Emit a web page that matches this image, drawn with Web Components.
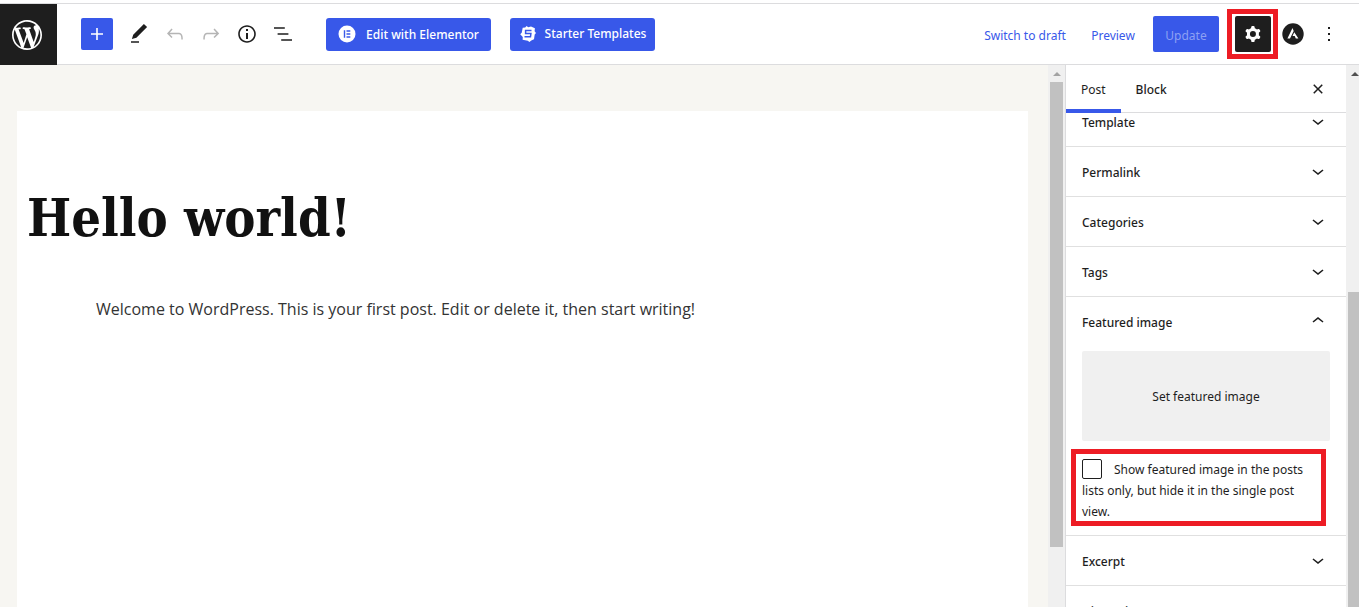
<!DOCTYPE html>
<html lang="en">
<head>
<meta charset="utf-8">
<title>Edit Post</title>
<style>
html, body { margin: 0; height: 100%; }
body { font-family: "Noto Sans", "Open Sans", sans-serif; font-size: 12px; color: #1e1e1e; background: #fff; overflow: hidden; }
</style>
</head>
<body>
<post-editor></post-editor>
<script>
const define = (name, html) => customElements.define(name, class extends HTMLElement {
  connectedCallback() {
    if (this.shadowRoot) return;
    const root = this.attachShadow({ mode: "open" });
    const t = document.createElement("template");
    t.innerHTML = typeof html === "function" ? html(this) : html;
    root.append(t.content.cloneNode(true));
  }
});

const ICONS = {
  plus: ["0 0 24 24", '<path d="M18 11.2h-5.2V6h-1.6v5.2H6v1.6h5.2V18h1.6v-5.2H18z"/>'],
  edit: ["0 0 24 24", '<path d="M20.1 5.1L16.9 2 6.2 12.7l-1.3 4.4 4.5-1.3L20.1 5.1zM4 20.8h8v-1.5H4v1.5z"/>'],
  undo: ["0 0 24 24", '<path d="M18.3 11.7c-.6-.6-1.4-.9-2.3-.9H6.7l2.9-3.3-1.1-1-4.5 5L8.5 16l1-1-2.7-2.7H16c.5 0 .9.2 1.3.5 1 1 1 3.4 1 4.5v.3h1.5v-.2c0-1.5 0-4.3-1.5-5.7z"/>'],
  redo: ["0 0 24 24", '<path d="M15.6 6.5l-1.1 1 2.9 3.3H8c-.9 0-1.7.3-2.3.9-1.4 1.5-1.4 4.2-1.4 5.6v.2h1.5v-.3c0-1.1 0-3.5 1-4.5.3-.3.7-.5 1.3-.5h9.2L14.5 15l1.1 1.1 4.6-4.6-4.6-5z"/>'],
  info: ["0 0 24 24", '<path d="M12 3.2c-4.8 0-8.8 3.9-8.8 8.8 0 4.8 3.9 8.8 8.8 8.8 4.8 0 8.8-3.9 8.8-8.8 0-4.8-4-8.8-8.8-8.8zm0 16c-4 0-7.2-3.3-7.2-7.2C4.8 8 8 4.8 12 4.8s7.2 3.3 7.2 7.2c0 4-3.2 7.2-7.2 7.2zM11 17h2v-6h-2v6zm0-8h2V7h-2v2z"/>'],
  list: ["0 0 24 24", '<path d="M13.800 5.200H3v1.500h10.800V5.200zm-3.600 12v1.500H21v-1.500H10.200zm7.200-6H6.600v1.500h10.800v-1.500z"/>'],
  cog: ["0 0 24 24", '<path fill-rule="evenodd" d="M10.289 4.836A1 1 0 0111.275 4h1.306a1 1 0 01.987.836l.244 1.466c.787.26 1.503.679 2.108 1.218l1.393-.522a1 1 0 011.216.437l.653 1.13a1 1 0 01-.23 1.273l-1.148.944a6.025 6.025 0 010 2.435l1.149.946a1 1 0 01.23 1.272l-.653 1.13a1 1 0 01-1.216.437l-1.394-.522c-.605.54-1.32.958-2.108 1.218l-.244 1.466a1 1 0 01-.987.836h-1.306a1 1 0 01-.986-.836l-.244-1.466a5.995 5.995 0 01-2.108-1.218l-1.394.522a1 1 0 01-1.217-.436l-.653-1.131a1 1 0 01.23-1.272l1.149-.946a6.026 6.026 0 010-2.435l-1.148-.944a1 1 0 01-.23-1.272l.653-1.131a1 1 0 011.217-.437l1.393.522a5.994 5.994 0 012.108-1.218l.244-1.466zM14.929 12a3 3 0 11-6 0 3 3 0 016 0z"/>'],
  more: ["0 0 24 24", '<path d="M13 19h-2v-2h2v2zm0-6h-2v-2h2v2zm0-6h-2V5h2v2z"/>'],
  down: ["0 0 24 24", '<path d="M17.5 11.6L12 16l-5.5-4.4.9-1.2L12 14l4.5-3.6 1 1.2z"/>'],
  up: ["0 0 24 24", '<path d="M6.5 12.4L12 8l5.5 4.4-.9 1.2L12 10l-4.5 3.6-1-1.2z"/>'],
  close: ["0 0 24 24", '<path d="M12 13.06l3.712 3.713 1.061-1.06L13.061 12l3.712-3.712-1.06-1.06L12 10.938 8.288 7.227l-1.061 1.06L10.939 12l-3.712 3.712 1.06 1.061L12 13.061z"/>'],
  wordpress: ["-2 -2 24 24", '<path d="M20 10c0-5.51-4.49-10-10-10C4.48 0 0 4.49 0 10c0 5.52 4.48 10 10 10 5.51 0 10-4.48 10-10zM7.78 15.37L4.37 6.22c.55-.02 1.17-.08 1.17-.08.5-.06.44-1.13-.06-1.11 0 0-1.45.11-2.37.11-.18 0-.37 0-.58-.01C4.12 2.69 6.87 1.11 10 1.11c2.33 0 4.45.87 6.05 2.34-.68-.11-1.65.39-1.65 1.58 0 .74.45 1.36.9 2.1.35.61.55 1.36.55 2.46 0 1.49-1.4 5-1.4 5l-3.03-8.37c.54-.02.82-.17.82-.17.5-.05.44-1.25-.06-1.22 0 0-1.44.12-2.38.12-.87 0-2.33-.12-2.33-.12-.5-.03-.56 1.2-.06 1.22l.92.08 1.26 3.41zM17.41 10c.24-.64.74-1.87.43-4.25.7 1.29 1.05 2.71 1.05 4.25 0 3.29-1.73 6.24-4.4 7.78.97-2.59 1.94-5.2 2.92-7.78zM6.1 18.09C3.12 16.65 1.11 13.53 1.11 10c0-1.3.23-2.48.72-3.59C3.25 10.3 4.67 14.2 6.1 18.09zm4.03-6.63l2.58 6.98c-.86.29-1.76.45-2.71.45-.79 0-1.57-.11-2.29-.33.81-2.38 1.62-4.74 2.42-7.1z"/>'],
  elementor: ["0 0 18 18", '<circle cx="9" cy="9" r="8.5"/><path fill="#3858e9" d="M5.800 5.300h1.400v7.400H5.800zM8.500 5.300h3.800v1.400H8.500zM8.500 8.300h3.800v1.400H8.500zM8.500 11.300h3.800v1.400H8.500z"/>'],
  starter: ["0 0 18 18", '<path d="M3.700 2.700 6.200 2.400 7.600.9 9.200 2.300 12 1.500 15.900 3.200 15.600 6.300 17 7.900 15.700 9.600 15 14.200 12.300 15.400 10.400 17.100 8.800 15.700 3.600 14.800 3.800 11.900 1.200 9.300 2.700 7.700z"/><path d="M12.500 5.600H6.600v2.900h5.300l-.4 3.300H5.500" fill="none" stroke="#3858e9" stroke-width="1.500"/>'],
  astra: ["0 0 22 22", '<circle cx="11" cy="11" r="10.700"/><path fill="#fff" d="M10.500 5 5.400 15.500H8L11.700 8zM12.300 9.300l-1.800 3.800h2.200l1.100 2.400h2.600z"/>']
};

define("wp-icon", el => {
  const [box, shapes] = ICONS[el.getAttribute("name")];
  const size = el.getAttribute("size") || 24;
  return `<style>:host{display:block;flex:none;line-height:0}svg{display:block;fill:currentColor}</style>
  <svg viewBox="${box}" width="${size}" height="${size}" aria-hidden="true">${shapes}</svg>`;
});

define("icon-button", el => `<style>
:host{display:block;flex:none}
button{display:flex;align-items:center;justify-content:center;width:36px;height:36px;padding:0;border:0;border-radius:2px;background:none;color:inherit}
:host([primary]) button{width:32px;height:32px;background:#3858e9;color:#fff}
:host([pressed]) button{background:#1e1e1e;color:#fff}
:host([muted]) button{color:#b5b5b5}
</style><button type="button" aria-label="${el.getAttribute("label")}"><wp-icon name="${el.getAttribute("icon")}" size="${el.getAttribute("size") || 24}"></wp-icon></button>`);

define("text-button", `<style>
:host{display:block;flex:none}
button{display:flex;align-items:center;justify-content:center;gap:8px;width:100%;height:33px;padding:0;border:0;border-radius:3px;background:#3858e9;color:#fff;font:500 12px/20px "Noto Sans","Open Sans",sans-serif;white-space:nowrap}
:host([plain]) button{background:none;color:#3858e9;font-weight:400;padding-top:3px}
:host([busy]) button{height:36px;border-radius:2px;color:#8da0f3;font-weight:400;padding-top:4px}
</style><button type="button"><slot></slot></button>`);

define("scroll-track", `<style>
:host{display:flex;flex-direction:column;flex:none;background:#f0f0f0;overflow:hidden}
.arrow{width:0;height:0;margin:7px auto 6px;border:4px solid transparent;border-top:0;border-bottom:4px solid var(--arrow,#a3a3a3)}
.thumb{margin:var(--before,0) 2px 0;flex:var(--grow,1) 1 0;background:#c1c1c1}
.rest{flex:var(--rest,0) 1 0}
</style><div class="arrow"></div><div class="thumb"></div><div class="rest"></div>`);

define("editor-header", `<style>
:host{display:flex;align-items:center;height:60px;border-top:1px solid #dcdcde;border-bottom:1px solid #dcdcde;background:#fff;padding-right:12px}
.logo{display:flex;align-items:center;justify-content:center;width:57px;height:61px;margin-bottom:-1px;padding-right:3px;box-sizing:border-box;background:#1e1e1e;color:#fff;flex:none}
.tools{display:flex;align-items:center;margin-left:24px}
.tools icon-button[primary]{margin-right:8px}
.elementor{width:165px;margin-left:25px}
.elementor wp-icon{margin-right:2px}
.elementor span{padding-top:2px}
.starter{width:145px;margin-left:19px}
.right{display:flex;align-items:center;margin-left:auto}
.draft{width:84px}
.preview{width:44px;margin-left:24px}
.update{width:66px;margin:0 8px 0 18px}
.mark{border:5px solid #ed1c24;padding:2px 2px 2px 3px}
.astra{margin-left:-3px}
</style>
<a class="logo" href="#" aria-label="View Posts"><wp-icon name="wordpress" size="36"></wp-icon></a>
<div class="tools">
<icon-button primary icon="plus" label="Toggle block inserter"></icon-button>
<icon-button icon="edit" label="Tools"></icon-button>
<icon-button muted icon="undo" label="Undo"></icon-button>
<icon-button muted icon="redo" label="Redo"></icon-button>
<icon-button icon="info" label="Details"></icon-button>
<icon-button icon="list" label="List View"></icon-button>
</div>
<text-button class="elementor"><wp-icon name="elementor" size="18"></wp-icon><span>Edit with Elementor</span></text-button>
<text-button class="starter"><wp-icon name="starter" size="18"></wp-icon><span>Starter Templates</span></text-button>
<div class="right">
<text-button plain class="draft">Switch to draft</text-button>
<text-button plain class="preview">Preview</text-button>
<text-button busy class="update">Update</text-button>
<div class="mark"><icon-button pressed icon="cog" label="Settings"></icon-button></div>
<icon-button class="astra" icon="astra" size="22" label="Astra Settings"></icon-button>
<icon-button icon="more" label="Options"></icon-button>
</div>`);

define("post-canvas", `<style>
:host{display:block;background:#f7f6f2;padding:46px 20px 0 17px;overflow:hidden;box-sizing:border-box}
article{background:#fff;height:100%;padding:71px 10px 0;box-sizing:border-box}
h1{margin:0;font:700 52px/72px "DejaVu Serif Condensed","DejaVu Serif",serif;color:#111}
p{margin:42px 69px 0;font:400 16px/26px "Open Sans",sans-serif;color:#333}
</style><article><h1>Hello world!</h1><p>Welcome to WordPress. This is your first post. Edit or delete it, then start writing!</p></article>`);

define("settings-panel", el => `<style>
:host{display:block;border-bottom:1px solid #e0e0e0}
h2{margin:0}
button{display:flex;align-items:center;justify-content:space-between;width:100%;height:49px;padding:2px 16px 0;border:0;background:none;color:#1e1e1e;font:500 12px/20px "Noto Sans","Open Sans",sans-serif}
wp-icon{margin-bottom:4px}
.body{padding:5px 16px 9px}
</style><h2><button type="button" aria-expanded="${el.hasAttribute("open")}"><span>${el.getAttribute("label")}</span><wp-icon name="${el.hasAttribute("open") ? "up" : "down"}"></wp-icon></button></h2>
${el.hasAttribute("open") ? '<div class="body"><slot></slot></div>' : ""}`);

define("featured-image", `<style>
:host{display:block}
.set{display:block;width:100%;height:90px;padding:2px 0 0;border:0;border-radius:2px;background:#f0f0f0;color:#1e1e1e;font:400 12px/20px "Noto Sans","Open Sans",sans-serif}
.mark{margin:8px 4px 0 -11px;border:5px solid #ed1c24;padding:5px 6px 1px;height:61px}
label{display:block;line-height:21px}
input{appearance:none;box-sizing:border-box;width:20px;height:20px;margin:0 12px 0 0;border:1px solid #1e1e1e;border-radius:2px;background:#fff;vertical-align:-5px}
</style><button type="button" class="set">Set featured image</button>
<div class="mark"><label><input type="checkbox">Show featured image in the posts lists only, but hide it in the single post view.</label></div>`);

define("settings-sidebar", `<style>
:host{display:flex;flex-direction:column;border-left:1px solid #dcdcde;background:#fff;overflow:hidden;box-sizing:border-box}
header{display:flex;align-items:center;height:47px;flex:none;border-bottom:1px solid #dcdcde;padding-right:10px}
header button{height:48px;margin-bottom:-1px;padding:2px 15px 0;border:0;background:none;color:#1e1e1e;font:500 12px/20px "Noto Sans","Open Sans",sans-serif}
header .active{box-shadow:inset 0 -4px #3858e9;font-weight:400}
icon-button{margin-left:auto}
.panels{flex:1;min-height:0;overflow:hidden}
.panels settings-panel:first-child{margin-top:-16px}
</style><header><button type="button" class="active">Post</button><button type="button">Block</button><icon-button icon="close" label="Close settings"></icon-button></header>
<div class="panels">
<settings-panel label="Template"></settings-panel>
<settings-panel label="Permalink"></settings-panel>
<settings-panel label="Categories"></settings-panel>
<settings-panel label="Tags"></settings-panel>
<settings-panel label="Featured image" open><featured-image></featured-image></settings-panel>
<settings-panel label="Excerpt"></settings-panel>
<settings-panel label="Discussion"></settings-panel>
</div>`);

define("post-editor", `<style>
:host{display:flex;flex-direction:column;height:100vh;padding-top:3px;box-sizing:border-box;overflow:hidden}
main{display:flex;flex:1;min-height:0}
post-canvas{flex:1;min-width:0}
.inner{width:17px;--grow:465;--rest:60}
settings-sidebar{width:281px;flex:none}
.outer{width:17px;margin-right:-4px;--before:210px;--arrow:#505050}
</style><editor-header></editor-header>
<main><post-canvas></post-canvas><scroll-track class="inner"></scroll-track><settings-sidebar></settings-sidebar><scroll-track class="outer"></scroll-track></main>`);
</script>
</body>
</html>
